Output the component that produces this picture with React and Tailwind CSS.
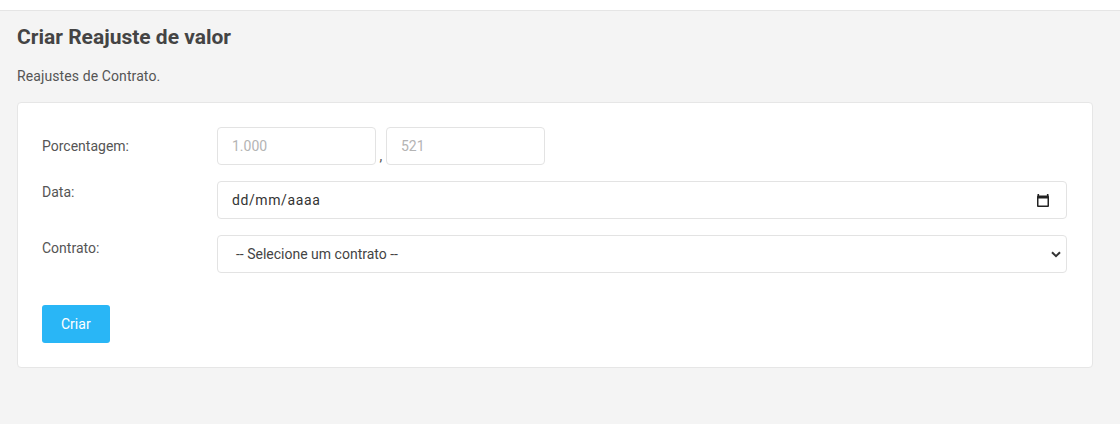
import React from "react";

function CalendarIcon() {
  return (
    <svg width="12" height="13" viewBox="0 0 12 13" className="block">
      <rect x="0.5" y="0" width="1.6" height="2.5" fill="#222" />
      <rect x="9.9" y="0" width="1.6" height="2.5" fill="#222" />
      <rect x="0" y="1.5" width="12" height="11.5" rx="1" fill="#222" />
      <rect x="1.5" y="4.5" width="9" height="7" fill="#fff" />
    </svg>
  );
}

function Chevron() {
  return (
    <svg width="10" height="7" viewBox="0 0 10 7" className="block">
      <path d="M1 1.2 L5 5.2 L9 1.2" fill="none" stroke="#333" strokeWidth="2" />
    </svg>
  );
}

export default function App() {
  return (
    <div
      className="min-h-screen bg-[#f4f4f4] text-[#444]"
      style={{ fontFamily: "Roboto, 'Liberation Sans', sans-serif" }}
    >
      <div className="h-[11px] bg-white border-b border-[#e5e5e5]" />
      <div className="pl-[17px] pr-[27px]">
        <h1 className="mt-[14px] text-[21px] leading-[24px] font-bold text-[#444]">
          Criar Reajuste de valor
        </h1>
        <p className="mt-[17px] text-[14px] leading-[20px] tracking-[0.1px] text-[#555]">
          Reajustes de Contrato.
        </p>
        <div className="mt-[16px] bg-white border border-[#e6e6e6] rounded-[4px] pt-[24px] pb-[24px] pl-[24px] pr-[25px]">
          <div className="flex items-center">
            <label className="w-[175px] text-[14px] leading-[21px] text-[#555]">Porcentagem:</label>
            <div className="flex items-end">
              <div className="w-[159px] h-[38px] border border-[#e3e3e3] rounded-[4px] flex items-center px-[14px] text-[14px] text-[#b4b4b4]">
                1.000
              </div>
              <span className="w-[10px] text-center text-[14px] leading-[14px] text-[#555] mb-[2px]">,</span>
              <div className="w-[159px] h-[38px] border border-[#e3e3e3] rounded-[4px] flex items-center px-[14px] text-[14px] text-[#b4b4b4]">
                521
              </div>
            </div>
          </div>

          <div className="flex items-start mt-[16px]">
            <label className="w-[175px] pt-[1px] text-[14px] leading-[21px] text-[#555]">Data:</label>
            <div className="flex-1 h-[38px] border border-[#e3e3e3] rounded-[4px] flex items-center justify-between pl-[14px] pr-[17px] text-[14px] text-[#333]">
              <span className="tracking-[0.6px]">dd/mm/aaaa</span>
              <CalendarIcon />
            </div>
          </div>

          <div className="flex items-start mt-[16px]">
            <label className="w-[175px] pt-[3px] text-[14px] leading-[21px] text-[#555]">Contrato:</label>
            <div className="flex-1 h-[38px] border border-[#e3e3e3] rounded-[4px] flex items-center justify-between pl-[18px] pr-[5px] text-[14px] text-[#444]">
              <span>-- Selecione um contrato --</span>
              <Chevron />
            </div>
          </div>

          <div className="mt-[32px]">
            <button className="h-[38px] px-[19px] bg-[#29b6f6] text-white text-[14px] rounded-[3px]">
              Criar
            </button>
          </div>
        </div>
      </div>
    </div>
  );
}
